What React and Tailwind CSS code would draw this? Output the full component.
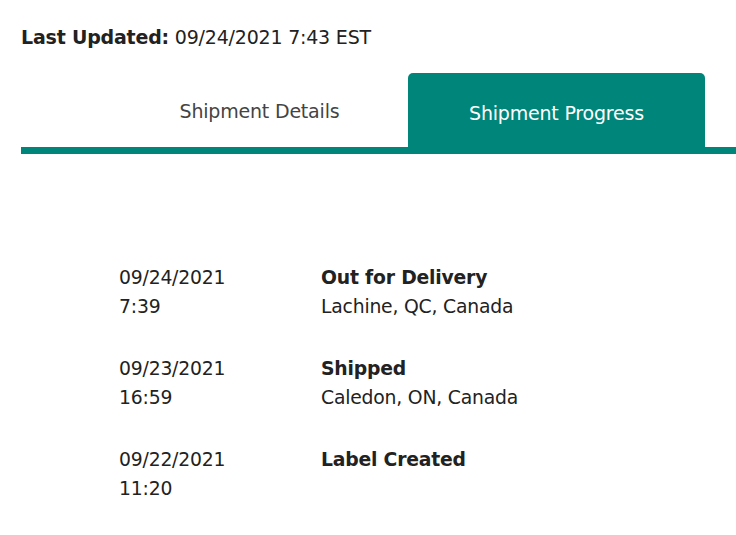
import { useState } from 'react';

const EVENTS = [
  { date: '09/24/2021', time: '7:39', status: 'Out for Delivery', place: 'Lachine, QC, Canada' },
  { date: '09/23/2021', time: '16:59', status: 'Shipped', place: 'Caledon, ON, Canada' },
  { date: '09/22/2021', time: '11:20', status: 'Label Created', place: '' },
];

const TABS = ['Shipment Details', 'Shipment Progress'];

export default function App() {
  const [tab, setTab] = useState(1);

  return (
    <div className="min-h-[535px] bg-white text-[#222] font-['DejaVu_Sans',sans-serif] overflow-hidden">
      {/* Header */}
      <div className="pl-[21px] pt-[24px] h-[73px] text-[19px] leading-[26px] tracking-[-0.2px]">
        <span className="font-bold">Last Updated:</span> 09/24/2021 7:43 EST
      </div>

      {/* Tabs */}
      <div className="ml-[21px] border-b-[7px] border-[#00857a] flex justify-end pr-[31px]">
        {TABS.map((t, i) => (
          <button
            key={t}
            onClick={() => setTab(i)}
            className={
              i === tab
                ? 'w-[297px] h-[74px] rounded-t-[5px] bg-[#00857a] text-white text-[19px] tracking-[-0.2px] pt-[7px]'
                : 'w-[297px] h-[74px] text-[#444] text-[19px] tracking-[-0.2px] pt-[3px]'
            }
          >
            {t}
          </button>
        ))}
      </div>

      {/* Timeline */}
      <div className="pt-[109px] pl-[119px] flex flex-col gap-[33px] text-[18.8px] leading-[29px] tracking-[-0.2px]">
        {EVENTS.map((e) => (
          <div key={e.date} className="flex">
            <div className="w-[202px] shrink-0">
              <div>{e.date}</div>
              <div>{e.time}</div>
            </div>
            <div>
              <div className="font-bold">{e.status}</div>
              {e.place && <div>{e.place}</div>}
            </div>
          </div>
        ))}
      </div>
    </div>
  );
}
